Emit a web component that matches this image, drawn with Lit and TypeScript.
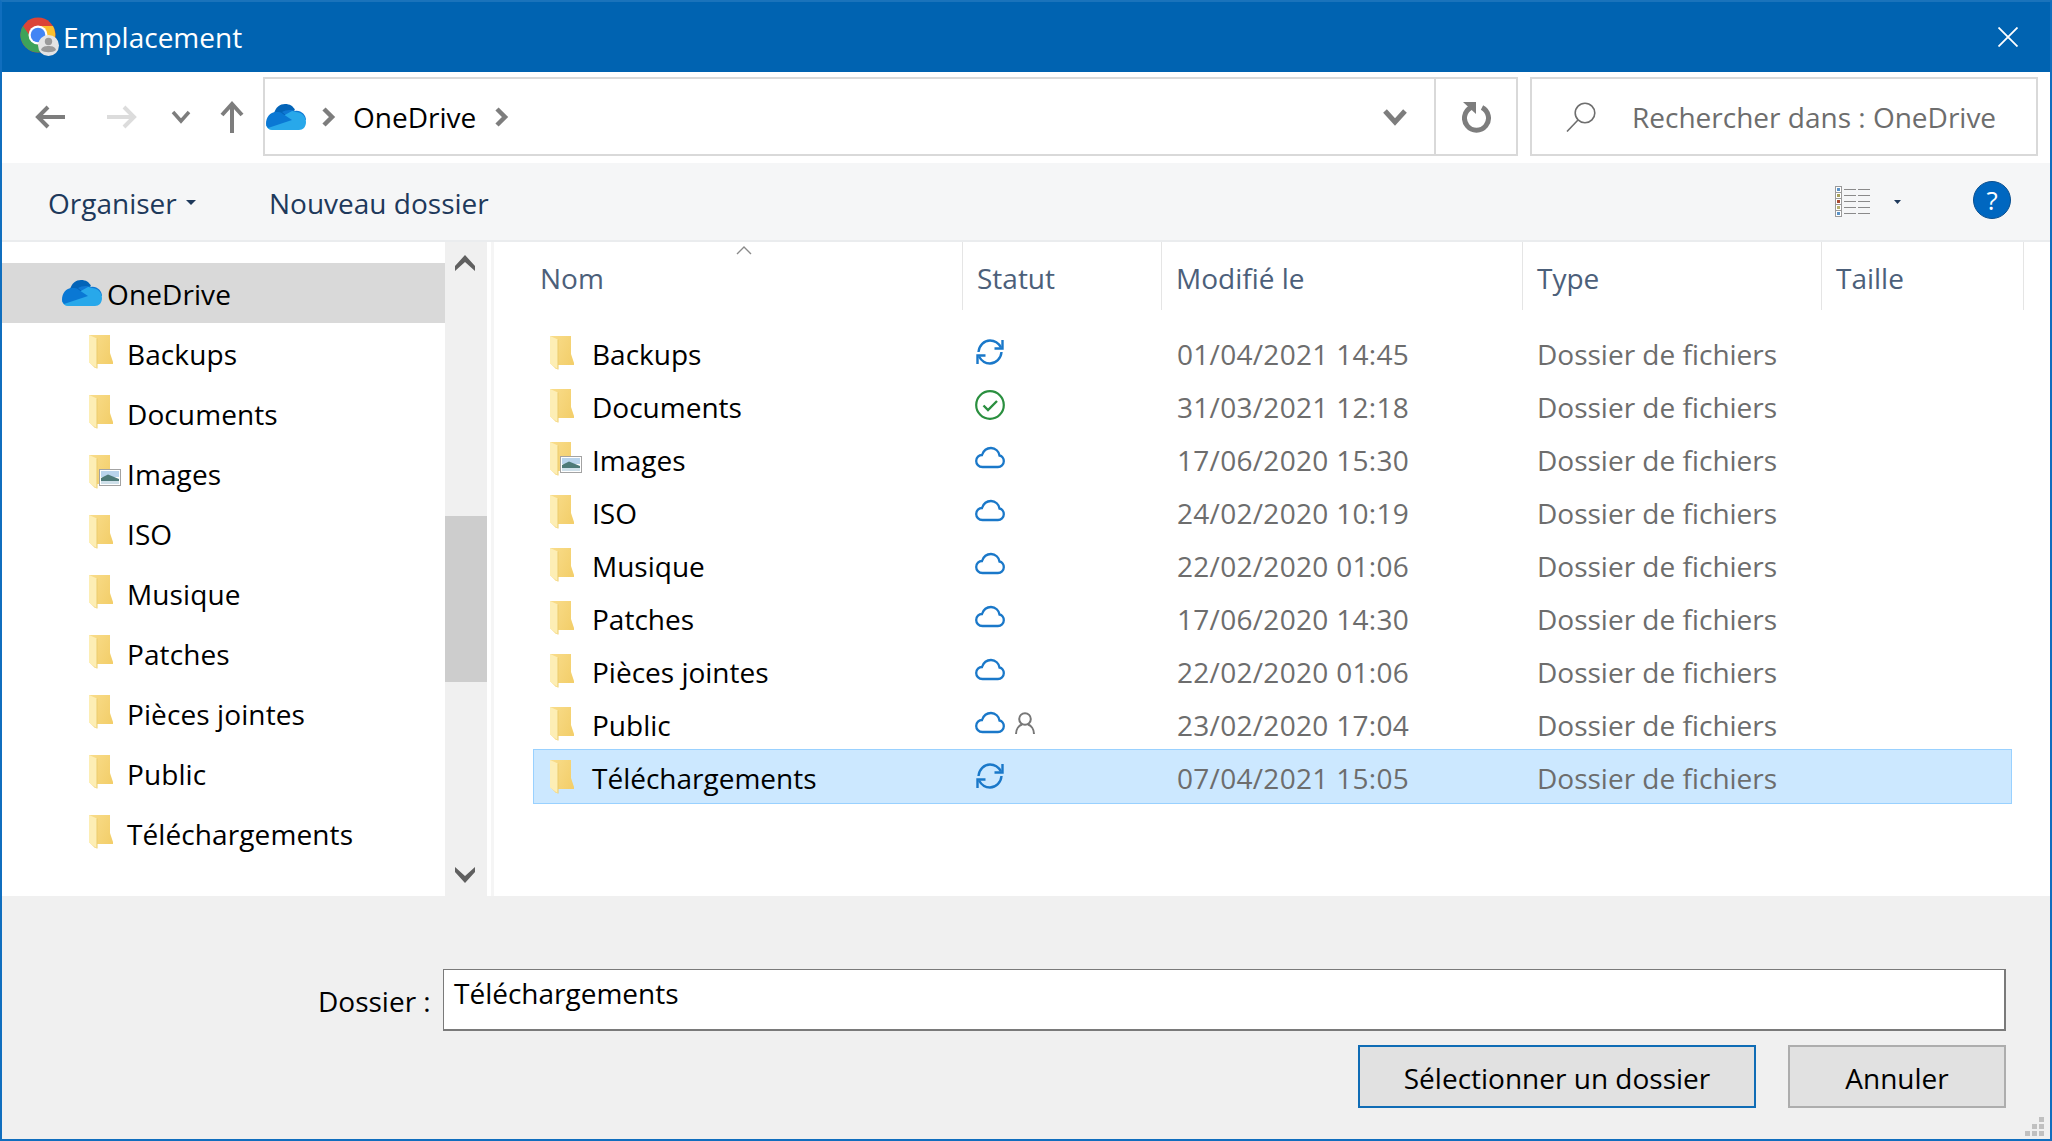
/**
 * app.ts renders a Windows folder picker dialog ("Emplacement") showing OneDrive.
 */

import { LitElement, css, html, svg } from 'lit';
import { customElement } from 'lit/decorators.js';

type Status = 'sync' | 'ok' | 'cloud' | 'shared';

interface FolderRow {
    name: string;
    status: Status;
    modified: string;
    pictures?: boolean;
    selected?: boolean;
}

const ROWS: FolderRow[] = [
    { name: 'Backups', status: 'sync', modified: '01/04/2021 14:45' },
    { name: 'Documents', status: 'ok', modified: '31/03/2021 12:18' },
    { name: 'Images', status: 'cloud', modified: '17/06/2020 15:30', pictures: true },
    { name: 'ISO', status: 'cloud', modified: '24/02/2020 10:19' },
    { name: 'Musique', status: 'cloud', modified: '22/02/2020 01:06' },
    { name: 'Patches', status: 'cloud', modified: '17/06/2020 14:30' },
    { name: 'Pièces jointes', status: 'cloud', modified: '22/02/2020 01:06' },
    { name: 'Public', status: 'shared', modified: '23/02/2020 17:04' },
    { name: 'Téléchargements', status: 'sync', modified: '07/04/2021 15:05', selected: true },
];

const COLUMNS = [
    { label: 'Nom', width: 430 },
    { label: 'Statut', width: 199 },
    { label: 'Modifié le', width: 361 },
    { label: 'Type', width: 299 },
    { label: 'Taille', width: 202 },
];

/** the yellow explorer folder, with the little picture overlay when asked. */
const folderIcon = (pictures = false) => html`
    <svg class="folder" width="36" height="36" viewBox="0 0 36 36">
        <defs>
            <linearGradient id="fb" x1="0" x2="1" y1="0" y2="0.6">
                <stop offset="0" stop-color="#f9dd8c"></stop>
                <stop offset="1" stop-color="#f3cf6c"></stop>
            </linearGradient>
        </defs>
        <path d="M0 0H21V18L24 27V29H8V33H6L0 27Z" fill="url(#fb)"></path>
        <path d="M0 0L8 3.500V33.500L0 27.500Z" fill="#fdeeb5"></path>
        <path d="M7.500 3.500H8.500V33.500H7.500Z" fill="#eccb6c"></path>
        ${pictures
            ? svg`
                <rect x="10.500" y="14.500" width="21" height="16" fill="#fff" stroke="#a3a3a3"></rect>
                <rect x="12" y="16" width="18" height="6" fill="#b9d4ec"></rect>
                <path d="M12 23L19 19.500L30 24V29H12Z" fill="#4d7a78"></path>
                <rect x="12" y="26" width="18" height="3" fill="#cfe0ea"></rect>
            `
            : ''}
    </svg>
`;

const oneDriveIcon = () => html`
    <svg class="onedrive" width="40" height="26" viewBox="0 0 40 26">
        <path d="M8 9C10 3 14 0 19 0C24 0 27 2 29 6L18 14Z" fill="#0364b8"></path>
        <path d="M16 8C19 6 25 5 29 7C35 6 40 11 40 16L28 18Z" fill="#0f78d4"></path>
        <path d="M17 12L26 7C27 7 28 7 30 8C35 8 40 12 40 18C40 23 37 26 33 26H6C3 26 1 24 0 21Z" fill="#28a8ea"></path>
        <path d="M0 20C0 13 4 8 10 8C13 8 15 8 17 10L26 16L2 24C1 23 0 21 0 20Z" fill="#0a78d4"></path>
    </svg>
`;

const statusIcon = (status: Status) => {
    if (status === 'sync') {
        return html`
            <svg width="30" height="30" viewBox="0 0 30 30" fill="none" stroke="#1a78c9" stroke-width="2.400">
                <path d="M3.500 15C4 8.500 9 3.500 15 3.500C19.500 3.500 23.500 6 26 10.500"></path>
                <path d="M27.500 3V11.500H19.500"></path>
                <path d="M26.500 15C26 21.500 21 26.500 15 26.500C10.500 26.500 6.500 24 4 19.500"></path>
                <path d="M2.500 27V18.500H10.500"></path>
            </svg>
        `;
    }
    if (status === 'ok') {
        return html`
            <svg width="30" height="30" viewBox="0 0 30 30" fill="none">
                <circle cx="15" cy="15" r="13.800" stroke="#2a8f3f" stroke-width="2.200"></circle>
                <path d="M8.500 15.500L13 20L22 11" stroke="#2a8f3f" stroke-width="2.400"></path>
            </svg>
        `;
    }
    const cloud = html`
        <svg width="30" height="30" viewBox="0 0 30 30" fill="none">
            <path
                d="M7.500 24C3.500 24 1.200 21 1.200 18C1.200 14.500 4 12 7 12C8.500 7.500 12 5 16 5C20.500 5 24 8.500 24.500 12.500C27 13 28.800 15.500 28.800 18.200C28.800 21.500 26 24 23 24Z"
                stroke="#1a78c9" stroke-width="2.300"
            ></path>
        </svg>
    `;
    if (status === 'cloud') {
        return cloud;
    }
    return html`
        ${cloud}
        <svg class="person" width="20" height="22" viewBox="0 0 20 22" fill="none" stroke="#777" stroke-width="2">
            <circle cx="10" cy="7" r="5.800"></circle>
            <path d="M1 22C1 17 4 13.500 7 12.500M19 22C19 17 16 13.500 13 12.500"></path>
        </svg>
    `;
};

@customElement('app-root')
export class AppRoot extends LitElement {
    static styles = css`
        :host {
            display: block;
            width: 2052px;
            height: 1141px;
            font-family: 'Open Sans', 'Noto Sans', sans-serif;
            color: #000;
        }

        .window {
            box-sizing: border-box;
            width: 2052px;
            height: 1141px;
            display: flex;
            flex-direction: column;
            border: 2px solid #106ebe;
            border-top-color: #1a73bb;
            background: #fff;
        }

        .titlebar {
            height: 70px;
            flex: none;
            display: flex;
            align-items: center;
            background: #0063b1;
            color: #fff;
            font-size: 28px;
            padding: 0 0 0 18px;
        }

        .titlebar .name {
            margin-left: 3px;
            margin-top: -1px;
        }

        .titlebar .close {
            margin-left: auto;
            margin-right: 32px;
            margin-top: -1px;
            display: flex;
        }

        .nav {
            height: 91px;
            flex: none;
            display: flex;
            align-items: flex-start;
            padding-top: 5px;
            box-sizing: border-box;
        }

        .nav-buttons {
            width: 261px;
            height: 79px;
            flex: none;
            display: flex;
            align-items: center;
            padding-left: 33px;
            box-sizing: border-box;
        }

        .nav-buttons svg {
            display: block;
        }

        .nav-buttons .forward {
            margin-left: 42px;
        }

        .nav-buttons .recent {
            margin-left: 34px;
        }

        .nav-buttons .up {
            margin-left: 29px;
        }

        .address {
            width: 1255px;
            height: 79px;
            flex: none;
            box-sizing: border-box;
            display: flex;
            align-items: center;
            border: 2px solid #d9d9d9;
            font-size: 28px;
        }

        .crumbs {
            flex: 1;
            display: flex;
            align-items: center;
            padding-left: 1px;
        }

        .crumbs .label {
            margin: 0 19px 0 17px;
        }

        .crumbs .sep-first {
            margin-left: 16px;
        }

        .address .drop {
            display: flex;
            margin-right: 27px;
        }

        .address .refresh {
            width: 82px;
            height: 100%;
            flex: none;
            display: flex;
            align-items: center;
            justify-content: center;
            border-left: 2px solid #d9d9d9;
            box-sizing: border-box;
            padding-left: 2px;
        }

        .search {
            width: 508px;
            height: 79px;
            flex: none;
            box-sizing: border-box;
            margin-left: 12px;
            display: flex;
            align-items: center;
            border: 2px solid #d9d9d9;
            color: #6d6d6d;
            font-size: 28px;
            padding-left: 34px;
        }

        .search span {
            margin-left: 36px;
            white-space: nowrap;
        }

        .toolbar {
            height: 77px;
            flex: none;
            display: flex;
            align-items: center;
            background: #f5f6f7;
            border-bottom: 2px solid #eaecee;
            box-sizing: content-box;
            color: #1e395b;
            font-size: 28px;
            padding-left: 46px;
        }

        .toolbar .text {
            margin-top: 3px;
        }

        .toolbar .organize {
            display: flex;
            align-items: center;
            gap: 9px;
            width: 221px;
        }

        .toolbar .caret {
            display: block;
            margin-top: -2px;
        }

        .toolbar .right {
            margin-left: auto;
            display: flex;
            align-items: center;
            margin-right: 39px;
        }

        .toolbar .view-caret {
            margin: 0 72px 0 23px;
            display: block;
        }

        .help {
            width: 38px;
            height: 38px;
            margin-top: -3px;
            border-radius: 50%;
            background: #0067c0;
            border: 1px solid #0a4f8f;
            box-sizing: border-box;
            color: #fff;
            display: flex;
            align-items: center;
            justify-content: center;
            font-size: 26px;
        }

        .panes {
            flex: 1;
            min-height: 0;
            display: flex;
        }

        .sidebar {
            width: 443px;
            flex: none;
            padding-top: 21px;
            box-sizing: border-box;
            font-size: 28px;
            letter-spacing: 0.1px;
        }

        .tree-row {
            height: 60px;
            display: flex;
            align-items: center;
            padding-left: 87px;
            box-sizing: border-box;
        }

        .tree-row .folder {
            margin-right: 2px;
        }

        .tree-row span {
            margin-top: 2px;
        }

        .tree-row.root {
            background: #d9d9d9;
            padding-left: 60px;
        }

        .tree-row.root span {
            margin-left: 5px;
        }

        .scrollbar {
            width: 42px;
            flex: none;
            background: #f0f0f0;
            display: flex;
            flex-direction: column;
            align-items: center;
        }

        .scrollbar .arrow {
            height: 42px;
            display: flex;
            align-items: center;
            justify-content: center;
            margin-left: -2px;
        }

        .scrollbar .track {
            flex: 1;
            align-self: stretch;
            padding-top: 232px;
            padding-bottom: 172px;
            box-sizing: border-box;
            display: flex;
        }

        .scrollbar .thumb {
            flex: 1;
            background: #cdcdcd;
        }

        .gutter {
            width: 4px;
            flex: none;
            border-right: 3px solid #f5f5f5;
            box-sizing: content-box;
        }

        .list {
            flex: 1;
            min-width: 0;
            position: relative;
            padding-left: 40px;
            font-size: 28px;
        }

        .header {
            display: flex;
            height: 68px;
            margin-left: -1px;
            margin-bottom: 17px;
            color: #4c607a;
        }

        .header div {
            box-sizing: border-box;
            flex: none;
            border-right: 1px solid #e5e5e5;
            padding: 17px 0 0 14px;
        }

        .header div:first-child {
            padding-left: 7px;
        }

        .sort {
            position: absolute;
            left: 242px;
            top: 4px;
        }

        .row {
            display: flex;
            align-items: center;
            height: 53px;
            margin: 0 38px 0 -1px;
            box-sizing: border-box;
            padding-left: 16px;
            border: 1px solid transparent;
        }

        .row.selected {
            background: #cce8ff;
            border-color: #99d1ff;
            height: 55px;
            margin-top: -2px;
            padding-top: 3px;
        }

        .row .folder {
            margin-right: 6px;
            flex: none;
        }

        .row .row-name {
            width: 383px;
            flex: none;
            white-space: nowrap;
        }

        .row .row-status {
            width: 202px;
            flex: none;
            display: flex;
            align-items: center;
            gap: 10px;
            margin-top: -4px;
        }

        .row .row-date {
            width: 360px;
            flex: none;
            color: #6d6d6d;
            letter-spacing: 0.3px;
        }

        .row .row-type {
            flex: none;
            color: #6d6d6d;
        }

        .footer {
            height: 243px;
            flex: none;
            background: #f0f0f0;
            display: flex;
            flex-direction: column;
            position: relative;
            font-size: 28px;
        }

        .field {
            display: flex;
            align-items: flex-start;
            margin-top: 73px;
            padding-left: 316px;
        }

        .field label {
            width: 125px;
            flex: none;
            margin-top: 13px;
        }

        .field .input {
            width: 1563px;
            height: 62px;
            flex: none;
            box-sizing: border-box;
            background: #fff;
            border: 2px solid #7a7a7a;
            border-width: 1px 2px 2px 1px;
            padding: 4px 0 0 10px;
        }

        .actions {
            display: flex;
            justify-content: flex-end;
            gap: 32px;
            margin-top: 14px;
            padding-right: 44px;
        }

        .actions button {
            height: 63px;
            box-sizing: border-box;
            background: #e1e1e1;
            border: 2px solid #adadad;
            font: inherit;
            color: #000;
            padding: 3px 0 0;
        }

        .actions .primary {
            width: 398px;
            border-color: #0f6cb5;
        }

        .actions .cancel {
            width: 218px;
        }

        .grip {
            position: absolute;
            right: 6px;
            bottom: 3px;
        }
    `;

    render() {
        return html`
            <div class="window">
                <div class="titlebar">
                    <svg width="40" height="40" viewBox="0 0 40 40">
                        <circle cx="18" cy="18" r="17.500" fill="#db4437"></circle>
                        <path d="M18 35.500A17.500 17.500 0 0 1 3 9L12 22L24 34A17.500 17.500 0 0 1 18 35.500Z" fill="#3da35a"></path>
                        <path d="M18 9H33A17.500 17.500 0 0 1 24 34L26 18Z" fill="#fbc02d"></path>
                        <circle cx="18" cy="18" r="9.500" fill="#fff"></circle>
                        <circle cx="18" cy="18" r="7.300" fill="#4285f4"></circle>
                        <circle cx="28.500" cy="28.500" r="10.500" fill="#e4e4e4"></circle>
                        <circle cx="28.500" cy="24.500" r="3.700" fill="#9a9a9a"></circle>
                        <path d="M21 33C22 29.500 25 29 28.500 29C32 29 35 29.500 36 33C33 36 24 36 21 33Z" fill="#9a9a9a"></path>
                    </svg>
                    <span class="name">Emplacement</span>
                    <span class="close">
                        <svg width="20" height="20" viewBox="0 0 20 20" fill="none" stroke="#fff" stroke-width="1.800">
                            <path d="M0.500 0.500L19.500 19.500M19.500 0.500L0.500 19.500"></path>
                        </svg>
                    </span>
                </div>
                <div class="nav">
                    <div class="nav-buttons">
                        <svg width="30" height="26" viewBox="0 0 30 26" fill="none" stroke="#7d7d7d" stroke-width="4">
                            <path d="M30 13H4M13 3L3 13L13 23"></path>
                        </svg>
                        <svg class="forward" width="30" height="26" viewBox="0 0 30 26" fill="none" stroke="#dcdcdc" stroke-width="4">
                            <path d="M0 13H26M17 3L27 13L17 23"></path>
                        </svg>
                        <svg class="recent" width="20" height="14" viewBox="0 0 20 14" fill="none" stroke="#7d7d7d" stroke-width="3.500">
                            <path d="M2 2L10 11L18 2"></path>
                        </svg>
                        <svg class="up" width="24" height="32" viewBox="0 0 24 32" fill="none" stroke="#7d7d7d" stroke-width="4">
                            <path d="M12 32V4M2 14L12 3L22 14"></path>
                        </svg>
                    </div>
                    <div class="address">
                        <div class="crumbs">
                            ${oneDriveIcon()}
                            <svg class="sep-first" width="14" height="20" viewBox="0 0 14 20" fill="none" stroke="#7d7d7d" stroke-width="4.500">
                                <path d="M2 2L10 10L2 18"></path>
                            </svg>
                            <span class="label">OneDrive</span>
                            <svg width="14" height="20" viewBox="0 0 14 20" fill="none" stroke="#7d7d7d" stroke-width="4.500">
                                <path d="M2 2L10 10L2 18"></path>
                            </svg>
                        </div>
                        <span class="drop">
                            <svg width="24" height="18" viewBox="0 0 24 18" fill="none" stroke="#7d7d7d" stroke-width="5">
                                <path d="M2 3L12 14L22 3"></path>
                            </svg>
                        </span>
                        <div class="refresh">
                            <svg width="30" height="32" viewBox="0 0 30 32" fill="none" stroke="#7d7d7d" stroke-width="5">
                                <path d="M20 6.500A12 12 0 1 1 9 6.500"></path>
                                <path d="M1 1H14V13Z" fill="#7d7d7d" stroke="none"></path>
                            </svg>
                        </div>
                    </div>
                    <div class="search">
                        <svg width="30" height="30" viewBox="0 0 30 30" fill="none" stroke="#6e6e6e" stroke-width="1.600">
                            <circle cx="19" cy="11" r="9.800"></circle>
                            <path d="M12 18L1 29.500"></path>
                        </svg>
                        <span>Rechercher dans : OneDrive</span>
                    </div>
                </div>
                <div class="toolbar">
                    <div class="organize text">
                        Organiser
                        <svg class="caret" width="10" height="5" viewBox="0 0 10 5"><path d="M0 0H10L5 5Z" fill="#1e395b"></path></svg>
                    </div>
                    <div class="text">Nouveau dossier</div>
                    <div class="right">
                        <svg width="36" height="32" viewBox="0 0 36 32" fill="none">
                            ${[1, 7, 13, 19, 25].map((y, i) => svg`
                                <rect x="0.500" y="${y - 0.5}" width="6" height="6" fill="#fff" stroke="#9a9a9a"></rect>
                                <rect x="2" y="${y + 1}" width="3" height="3" fill="${['#5b93c7', '#a7a05c', '#a8492f', '#b5b170', '#5b93c7'][i]}"></rect>
                                <path d="M9 ${y + 2.5}H21M23 ${y + 2.5}H35" stroke="#8a8a8a" stroke-width="1"></path>
                            `)}
                        </svg>
                        <svg class="view-caret" width="7" height="4" viewBox="0 0 7 4"><path d="M0 0H7L3.500 4Z" fill="#1e395b"></path></svg>
                        <div class="help">?</div>
                    </div>
                </div>
                <div class="panes">
                    <div class="sidebar">
                        <div class="tree-row root">${oneDriveIcon()}<span>OneDrive</span></div>
                        ${ROWS.map((row) => html`
                            <div class="tree-row">${folderIcon(row.pictures)}<span>${row.name}</span></div>
                        `)}
                    </div>
                    <div class="scrollbar">
                        <div class="arrow">
                            <svg width="20" height="16" viewBox="0 0 20 16"><path d="M0 11L10 0L20 11V16L10 7L0 16Z" fill="#606060"></path></svg>
                        </div>
                        <div class="track"><div class="thumb"></div></div>
                        <div class="arrow">
                            <svg width="20" height="16" viewBox="0 0 20 16"><path d="M0 5L10 16L20 5V0L10 9L0 0Z" fill="#606060"></path></svg>
                        </div>
                    </div>
                    <div class="gutter"></div>
                    <div class="list">
                        <div class="header">
                            ${COLUMNS.map((col) => html`<div style="width:${col.width}px">${col.label}</div>`)}
                        </div>
                        <svg class="sort" width="16" height="9" viewBox="0 0 16 9" fill="none" stroke="#8a8a8a" stroke-width="1.400">
                            <path d="M1 8L8 1L15 8"></path>
                        </svg>
                        ${ROWS.map((row) => html`
                            <div class="row ${row.selected ? 'selected' : ''}">
                                ${folderIcon(row.pictures)}
                                <span class="row-name">${row.name}</span>
                                <span class="row-status">${statusIcon(row.status)}</span>
                                <span class="row-date">${row.modified}</span>
                                <span class="row-type">Dossier de fichiers</span>
                            </div>
                        `)}
                    </div>
                </div>
                <div class="footer">
                    <div class="field">
                        <label>Dossier :</label>
                        <div class="input">Téléchargements</div>
                    </div>
                    <div class="actions">
                        <button class="primary">Sélectionner un dossier</button>
                        <button class="cancel">Annuler</button>
                    </div>
                    <svg class="grip" width="19" height="19" viewBox="0 0 19 19" fill="#c0c0c0">
                        <rect x="14" y="0" width="5" height="5"></rect>
                        <rect x="7" y="7" width="5" height="5"></rect>
                        <rect x="14" y="7" width="5" height="5"></rect>
                        <rect x="0" y="14" width="5" height="5"></rect>
                        <rect x="7" y="14" width="5" height="5"></rect>
                        <rect x="14" y="14" width="5" height="5"></rect>
                    </svg>
                </div>
            </div>
        `;
    }
}
